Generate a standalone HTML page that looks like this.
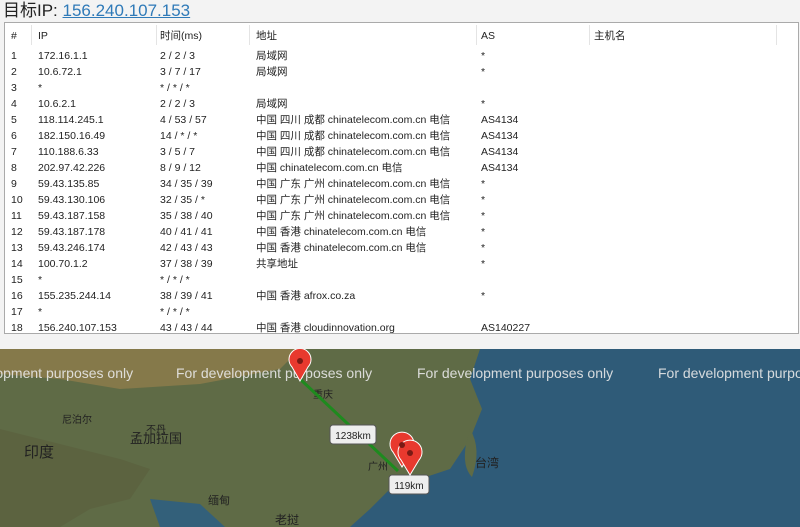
<!DOCTYPE html>
<html><head><meta charset="utf-8"><style>
body{margin:0;width:800px;height:527px;overflow:hidden;background:#f3f3f3;font-family:"Liberation Sans","Noto Sans CJK SC",sans-serif;position:relative}
.title{position:absolute;left:3px;top:0;font-size:17px;color:#222;line-height:22px}
.title a{color:#2f7ab8;text-decoration:underline}
.box{position:absolute;left:4px;top:22px;width:795px;height:312px;background:#fff;border:1px solid #aaa;box-sizing:border-box}
.r{position:absolute;left:0;height:16px;font-size:10.5px;color:#222;line-height:16px;white-space:nowrap}
.r span{position:absolute}
.sep{position:absolute;top:2px;height:20px;width:1px;background:#e4e4e4}
.map{position:absolute;left:0;top:349px;width:800px;height:178px;overflow:hidden}
</style></head><body>
<div class="title">目标IP: <a>156.240.107.153</a></div>
<div class="box">
<div class="sep" style="left:26px"></div><div class="sep" style="left:151px"></div><div class="sep" style="left:244px"></div><div class="sep" style="left:471px"></div><div class="sep" style="left:584px"></div><div class="sep" style="left:771px"></div>
<div class="r" style="top:5px"><span style="left:6px">#</span><span style="left:33px">IP</span><span style="left:155px">时间(ms)</span><span style="left:251px">地址</span><span style="left:476px">AS</span><span style="left:589px">主机名</span></div>
<div class="r" style="top:25px"><span style="left:6px">1</span><span style="left:33px">172.16.1.1</span><span style="left:155px">2 / 2 / 3</span><span style="left:251px">局域网</span><span style="left:476px">*</span></div>
<div class="r" style="top:41px"><span style="left:6px">2</span><span style="left:33px">10.6.72.1</span><span style="left:155px">3 / 7 / 17</span><span style="left:251px">局域网</span><span style="left:476px">*</span></div>
<div class="r" style="top:57px"><span style="left:6px">3</span><span style="left:33px">*</span><span style="left:155px">* / * / *</span></div>
<div class="r" style="top:73px"><span style="left:6px">4</span><span style="left:33px">10.6.2.1</span><span style="left:155px">2 / 2 / 3</span><span style="left:251px">局域网</span><span style="left:476px">*</span></div>
<div class="r" style="top:89px"><span style="left:6px">5</span><span style="left:33px">118.114.245.1</span><span style="left:155px">4 / 53 / 57</span><span style="left:251px">中国 四川 成都 chinatelecom.com.cn 电信</span><span style="left:476px">AS4134</span></div>
<div class="r" style="top:105px"><span style="left:6px">6</span><span style="left:33px">182.150.16.49</span><span style="left:155px">14 / * / *</span><span style="left:251px">中国 四川 成都 chinatelecom.com.cn 电信</span><span style="left:476px">AS4134</span></div>
<div class="r" style="top:121px"><span style="left:6px">7</span><span style="left:33px">110.188.6.33</span><span style="left:155px">3 / 5 / 7</span><span style="left:251px">中国 四川 成都 chinatelecom.com.cn 电信</span><span style="left:476px">AS4134</span></div>
<div class="r" style="top:137px"><span style="left:6px">8</span><span style="left:33px">202.97.42.226</span><span style="left:155px">8 / 9 / 12</span><span style="left:251px">中国 chinatelecom.com.cn 电信</span><span style="left:476px">AS4134</span></div>
<div class="r" style="top:153px"><span style="left:6px">9</span><span style="left:33px">59.43.135.85</span><span style="left:155px">34 / 35 / 39</span><span style="left:251px">中国 广东 广州 chinatelecom.com.cn 电信</span><span style="left:476px">*</span></div>
<div class="r" style="top:169px"><span style="left:6px">10</span><span style="left:33px">59.43.130.106</span><span style="left:155px">32 / 35 / *</span><span style="left:251px">中国 广东 广州 chinatelecom.com.cn 电信</span><span style="left:476px">*</span></div>
<div class="r" style="top:185px"><span style="left:6px">11</span><span style="left:33px">59.43.187.158</span><span style="left:155px">35 / 38 / 40</span><span style="left:251px">中国 广东 广州 chinatelecom.com.cn 电信</span><span style="left:476px">*</span></div>
<div class="r" style="top:201px"><span style="left:6px">12</span><span style="left:33px">59.43.187.178</span><span style="left:155px">40 / 41 / 41</span><span style="left:251px">中国 香港 chinatelecom.com.cn 电信</span><span style="left:476px">*</span></div>
<div class="r" style="top:217px"><span style="left:6px">13</span><span style="left:33px">59.43.246.174</span><span style="left:155px">42 / 43 / 43</span><span style="left:251px">中国 香港 chinatelecom.com.cn 电信</span><span style="left:476px">*</span></div>
<div class="r" style="top:233px"><span style="left:6px">14</span><span style="left:33px">100.70.1.2</span><span style="left:155px">37 / 38 / 39</span><span style="left:251px">共享地址</span><span style="left:476px">*</span></div>
<div class="r" style="top:249px"><span style="left:6px">15</span><span style="left:33px">*</span><span style="left:155px">* / * / *</span></div>
<div class="r" style="top:265px"><span style="left:6px">16</span><span style="left:33px">155.235.244.14</span><span style="left:155px">38 / 39 / 41</span><span style="left:251px">中国 香港 afrox.co.za</span><span style="left:476px">*</span></div>
<div class="r" style="top:281px"><span style="left:6px">17</span><span style="left:33px">*</span><span style="left:155px">* / * / *</span></div>
<div class="r" style="top:297px"><span style="left:6px">18</span><span style="left:33px">156.240.107.153</span><span style="left:155px">43 / 43 / 44</span><span style="left:251px">中国 香港 cloudinnovation.org</span><span style="left:476px">AS140227</span></div>
</div>
<div class="map">
<svg width="800" height="178" viewBox="0 0 800 178" font-family="Liberation Sans, Noto Sans CJK SC, sans-serif">
<rect width="800" height="178" fill="#2f5b78"/>
<path d="M0 0 H480 L470 30 L482 60 L470 90 L450 120 L420 130 L390 140 L370 160 L350 178 H0Z" fill="#5f6b46"/>
<path d="M0 0 H300 L280 20 L200 35 L120 40 L60 30 L0 25Z" fill="#85794a"/>
<path d="M0 80 L60 95 L120 110 L150 120 L130 150 L90 160 L60 178 H0Z" fill="#5c6340"/>
<path d="M150 150 L200 155 L225 178 H160Z" fill="#33607a"/>
<path d="M470 80 Q482 100 472 128 Q462 118 466 95Z" fill="#5f6b46"/>
<g fill="#e8e8e8" font-size="14" opacity="0.9"><text x="-63" y="29">For development purposes only</text><text x="176" y="29">For development purposes only</text><text x="417" y="29">For development purposes only</text><text x="658" y="29">For development purposes only</text></g>
<g fill="#222" font-size="10"><text x="313" y="49">重庆</text><text x="62" y="74">尼泊尔</text><text x="146" y="84">不丹</text><text x="368" y="121">广州</text></g>
<text x="475" y="118" fill="#222" font-size="12">台湾</text>
<text x="130" y="94" fill="#222" font-size="13">孟加拉国</text>
<text x="24" y="108" fill="#222" font-size="15">印度</text>
<text x="208" y="155" fill="#222" font-size="11">缅甸</text>
<text x="275" y="175" fill="#222" font-size="12">老挝</text>
<line x1="300" y1="30" x2="398" y2="122" stroke="#1e8a1e" stroke-width="3"/>
<rect x="330" y="76" width="46" height="19" rx="3" fill="#eee" stroke="#555"/><text x="353" y="90" text-anchor="middle" font-size="10" fill="#222">1238km</text>
<rect x="389" y="126" width="40" height="19" rx="3" fill="#eee" stroke="#555"/><text x="409" y="140" text-anchor="middle" font-size="10" fill="#222">119km</text>
<g fill="#e8392e" stroke="#fff" stroke-width="1"><path d="M300 32 L292 18 A11 11 0 1 1 308 18Z"/><path d="M402 118 L393 103 A12 12 0 1 1 411 103Z"/><path d="M410 126 L401 111 A12 12 0 1 1 419 111Z"/></g>
<g fill="#7a1a14"><circle cx="300" cy="12" r="3"/><circle cx="402" cy="96" r="3"/><circle cx="410" cy="104" r="3"/></g>
</svg>
</div>
</body></html>
